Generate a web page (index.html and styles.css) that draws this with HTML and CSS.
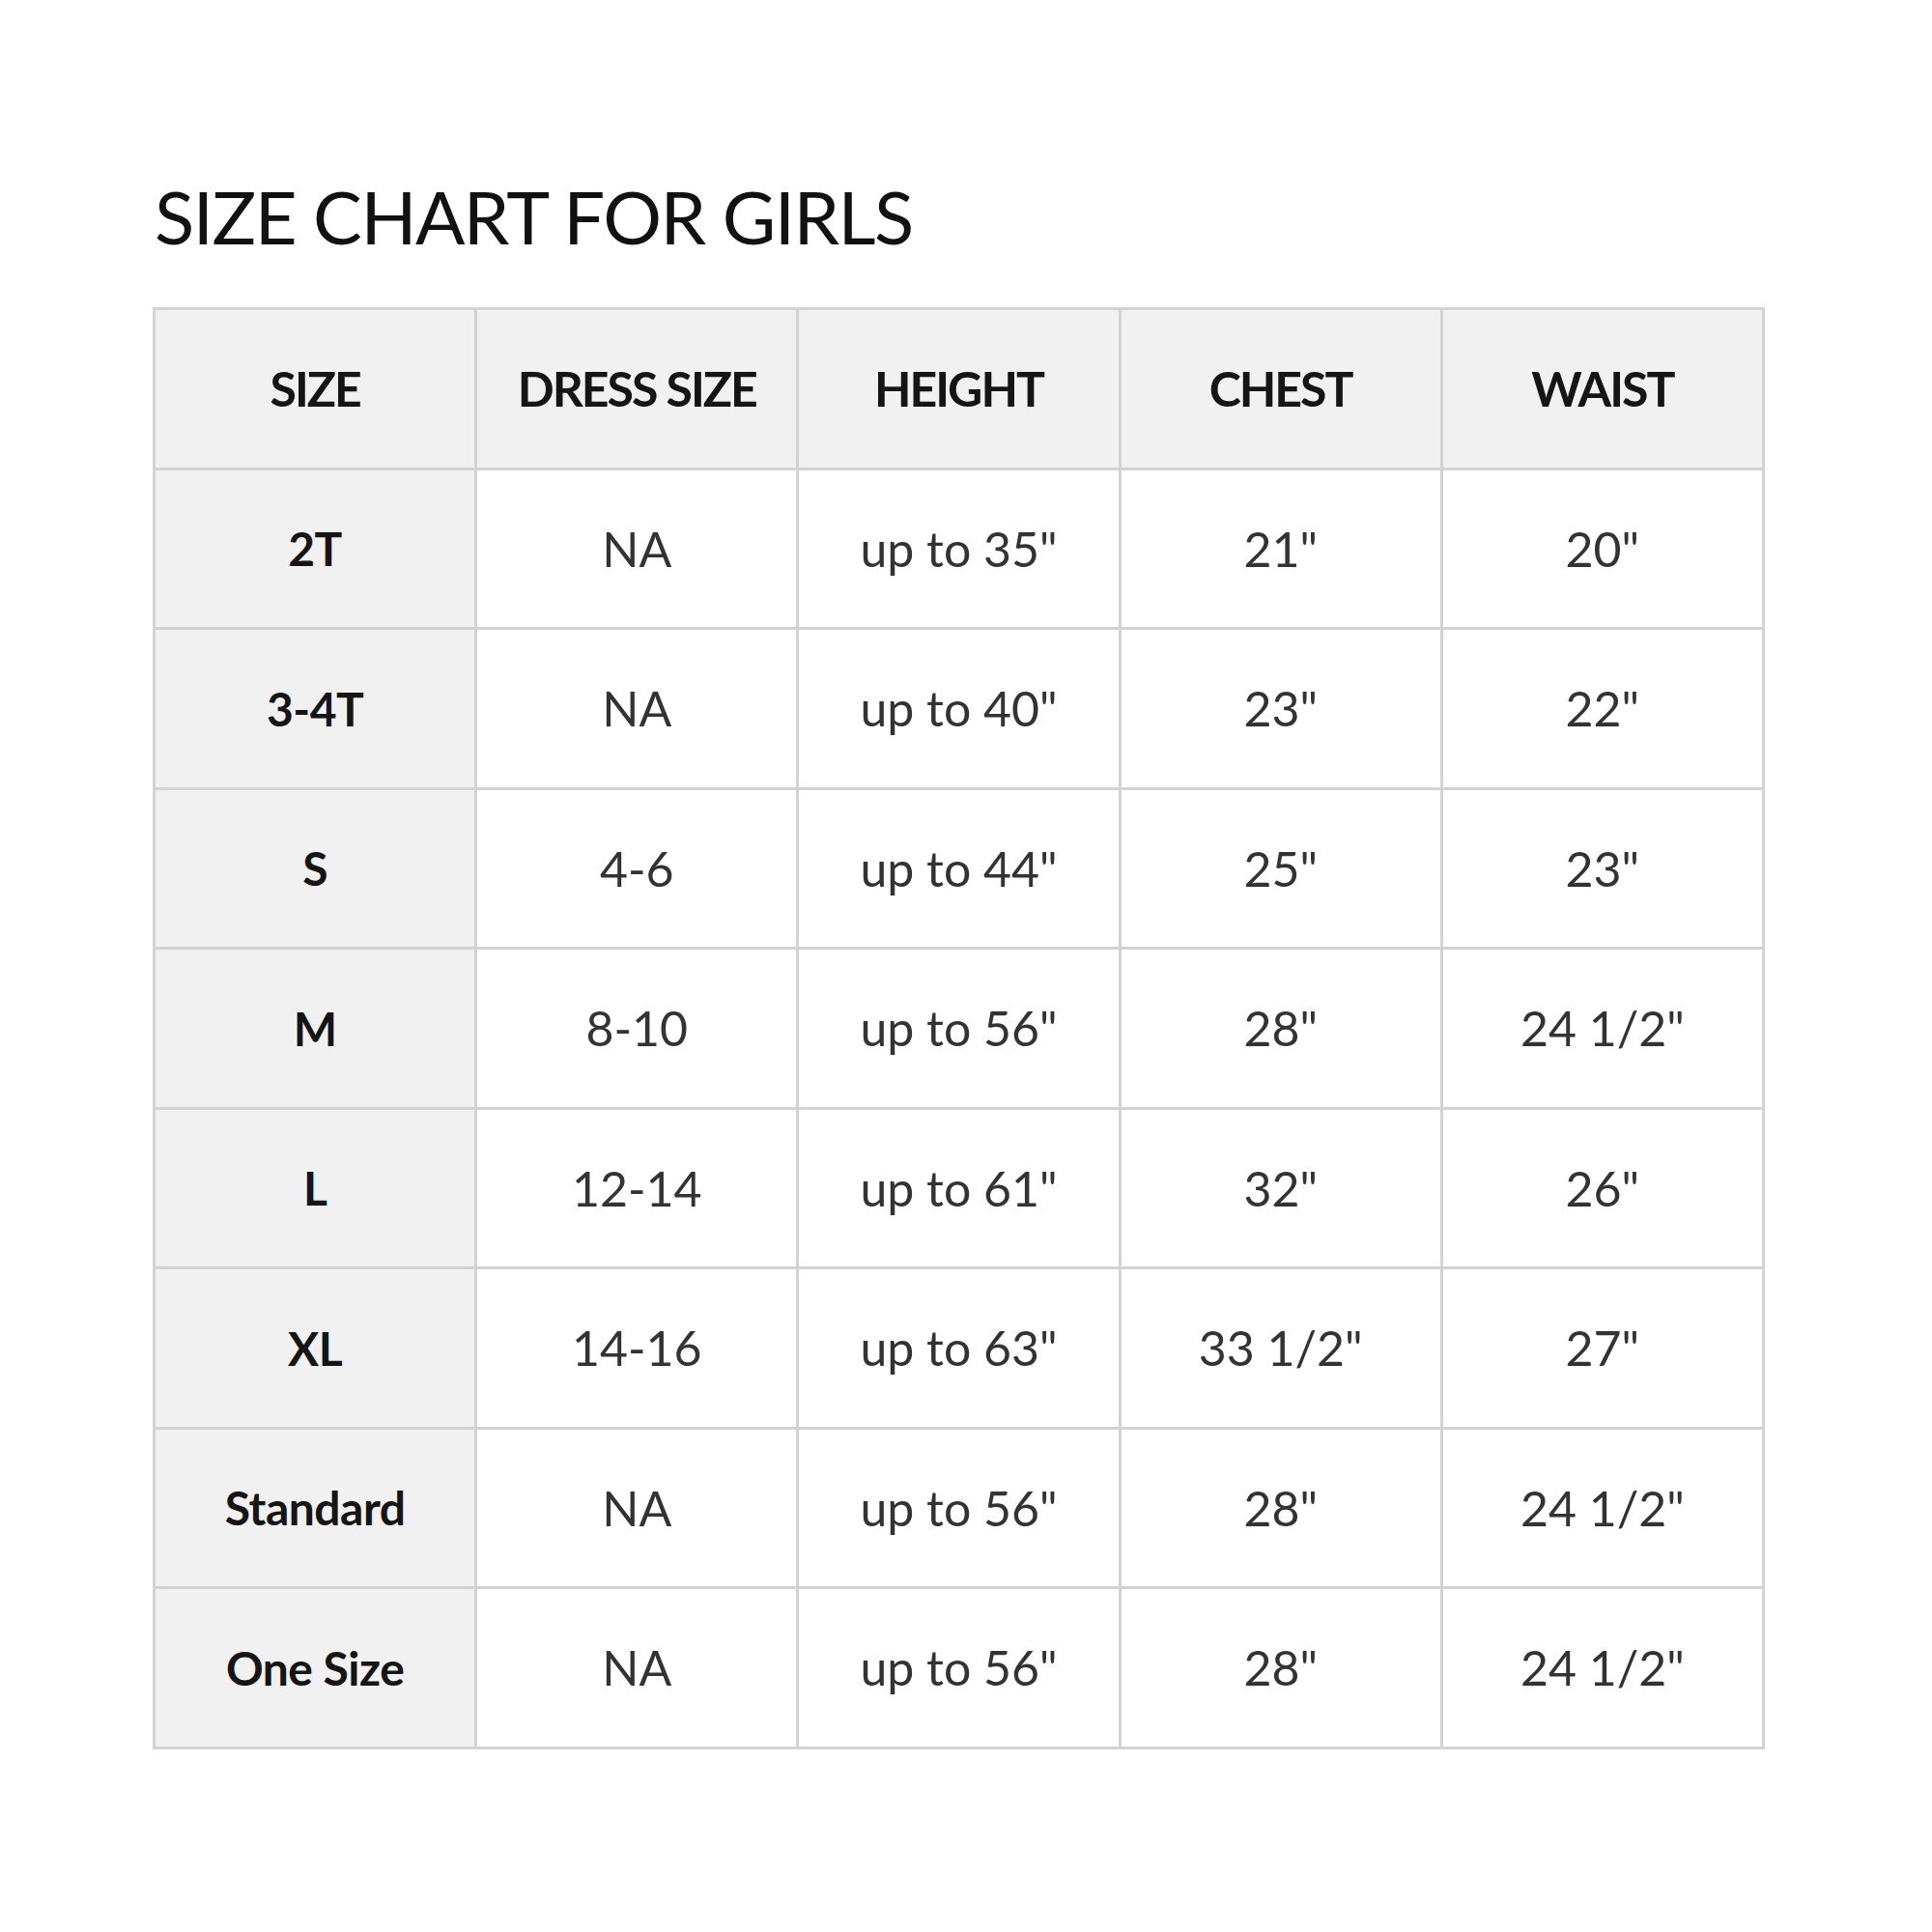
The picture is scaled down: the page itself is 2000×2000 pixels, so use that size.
FILE: index.html
```html
<!DOCTYPE html>
<html>
<head>
<meta charset="utf-8">
<title>Size Chart for Girls</title>
<link rel="stylesheet" href="styles.css">
</head>
<body>
<main class="page">
  <h1 class="title">SIZE CHART FOR GIRLS</h1>
  <table class="chart">
    <thead>
      <tr><th>SIZE</th><th>DRESS SIZE</th><th>HEIGHT</th><th>CHEST</th><th>WAIST</th></tr>
    </thead>
    <tbody>
      <tr><th>2T</th><td>NA</td><td>up to 35"</td><td>21"</td><td>20"</td></tr>
      <tr><th>3-4T</th><td>NA</td><td>up to 40"</td><td>23"</td><td>22"</td></tr>
      <tr><th>S</th><td>4-6</td><td>up to 44"</td><td>25"</td><td>23"</td></tr>
      <tr><th>M</th><td>8-10</td><td>up to 56"</td><td>28"</td><td>24 1/2"</td></tr>
      <tr><th>L</th><td>12-14</td><td>up to 61"</td><td>32"</td><td>26"</td></tr>
      <tr><th>XL</th><td>14-16</td><td>up to 63"</td><td>33 1/2"</td><td>27"</td></tr>
      <tr><th>Standard</th><td>NA</td><td>up to 56"</td><td>28"</td><td>24 1/2"</td></tr>
      <tr><th>One Size</th><td>NA</td><td>up to 56"</td><td>28"</td><td>24 1/2"</td></tr>
    </tbody>
  </table>
</main>
</body>
</html>
```
FILE: styles.css
```css
html, body {
  margin: 0;
  padding: 0;
  background: #ffffff;
}
.page {
  padding: 186px 0 0 158px;
  font-family: Lato, "Liberation Sans", sans-serif;
}
.title {
  margin: 0 0 56px 2px;
  font-size: 76px;
  line-height: 1;
  font-weight: 400;
  color: #111111;
  letter-spacing: -1.5px;
}
.chart {
  border-collapse: collapse;
  width: 1669px;
  table-layout: fixed;
}
.chart th,
.chart td {
  border: 3px solid #d3d3d3;
  height: 162.5px;
  padding: 0;
  text-align: center;
  vertical-align: middle;
}
.chart thead th {
  background: #f1f1f1;
  font-size: 50px;
  font-weight: 700;
  color: #151515;
  letter-spacing: -2px;
}
.chart tbody th {
  background: #f1f1f1;
  font-size: 48px;
  font-weight: 700;
  color: #151515;
  letter-spacing: -0.5px;
}
.chart td {
  background: #ffffff;
  font-size: 50px;
  font-weight: 400;
  color: #333333;
  letter-spacing: 0;
}
```
